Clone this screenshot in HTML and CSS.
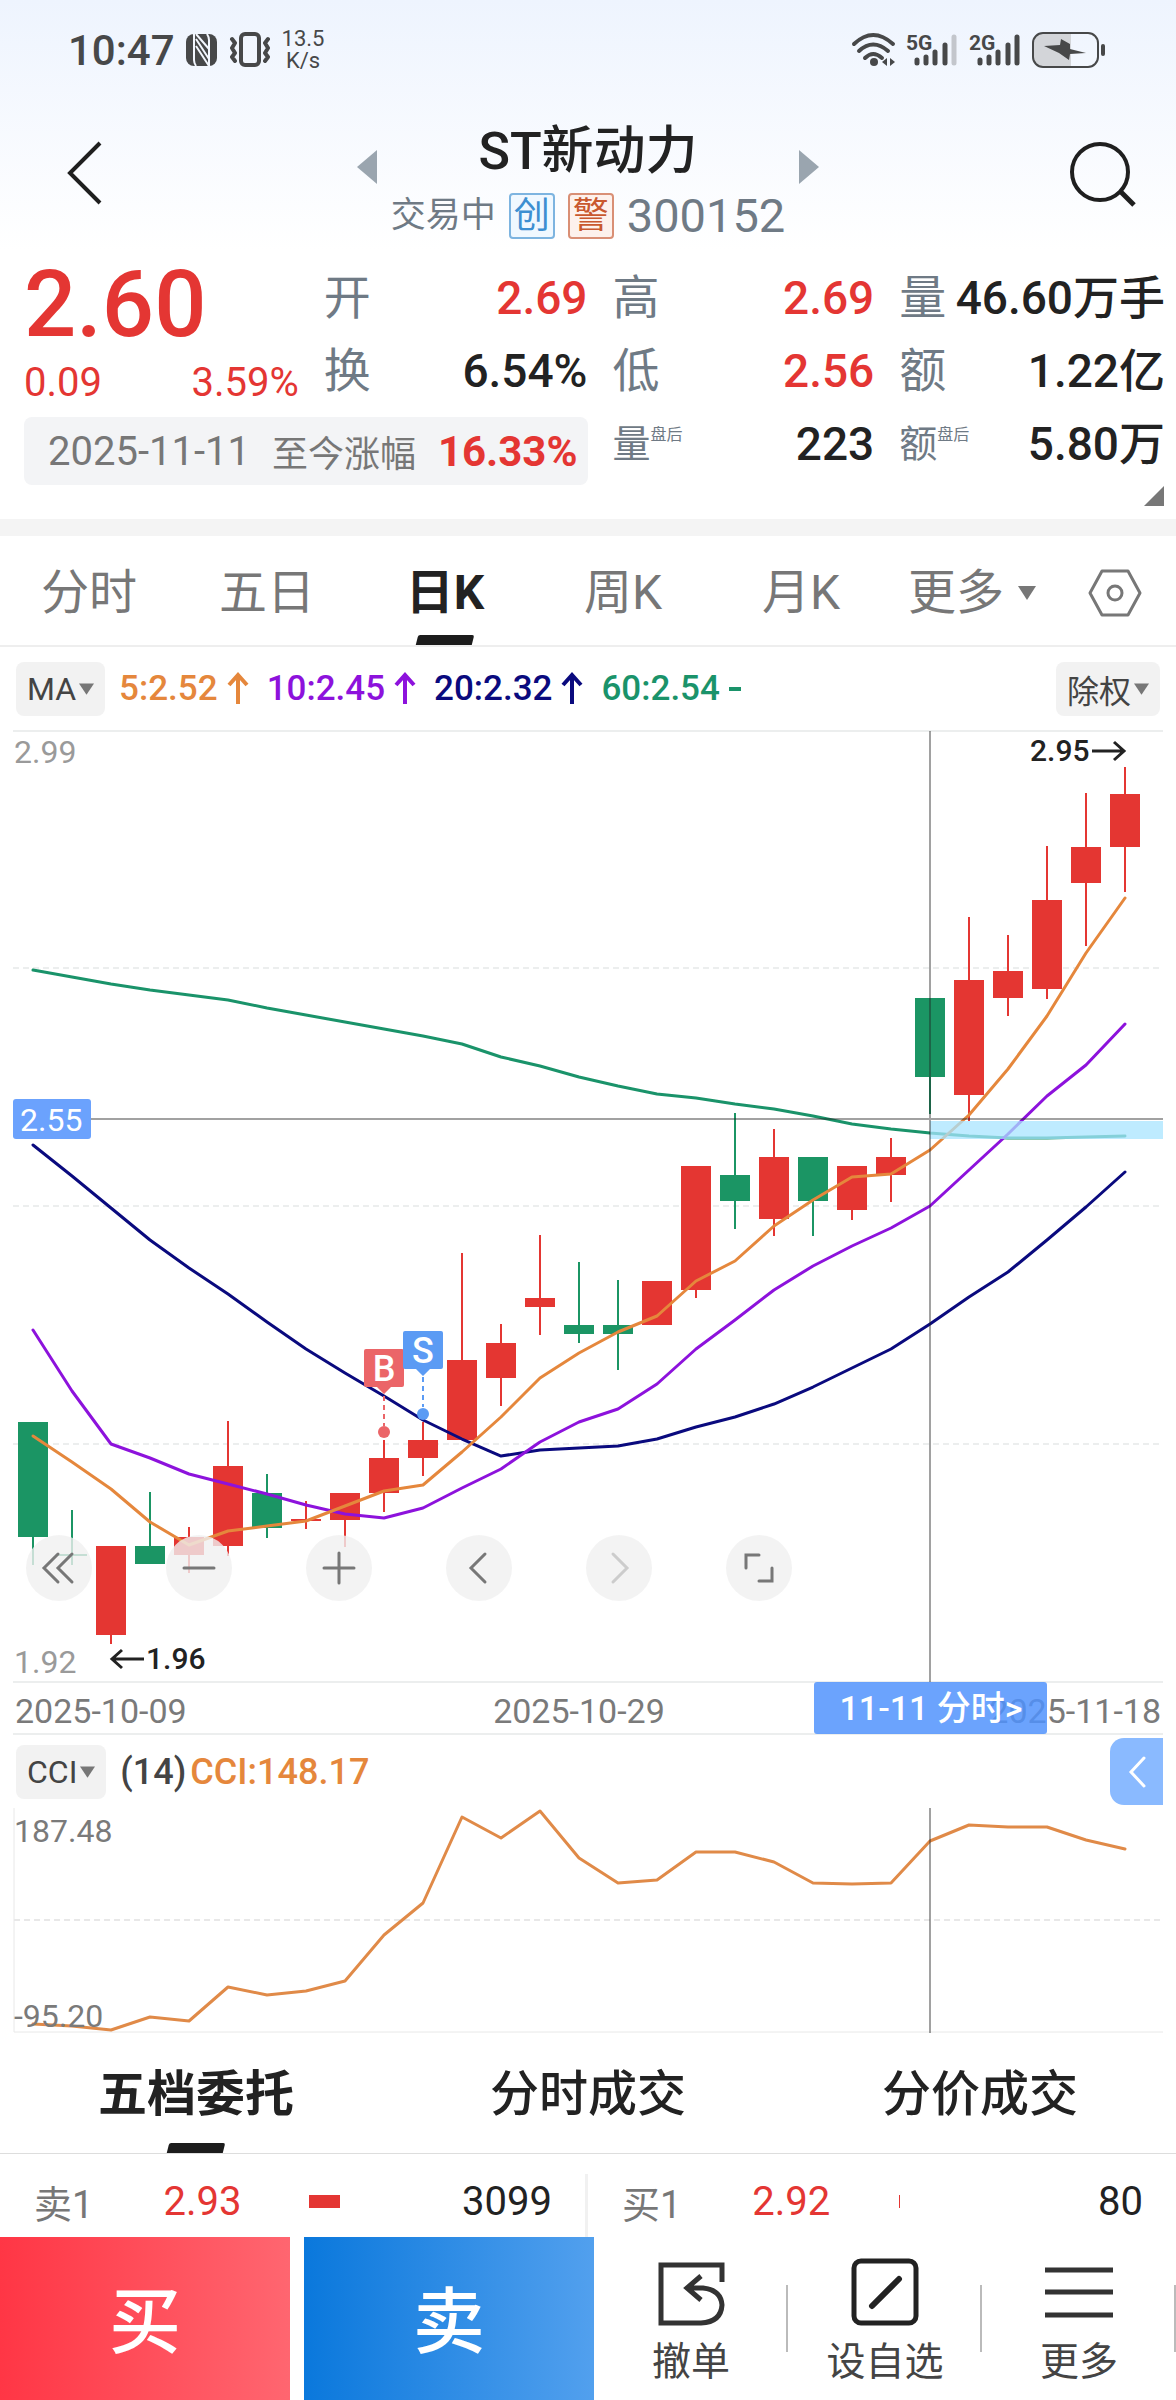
FILE: index.html
```html
<!DOCTYPE html>
<html lang="zh-CN">

<head>
    <meta charset="UTF-8">
    <meta name="viewport" content="width=device-width, initial-scale=1.0">
    <title>ST新动力 300152</title>
    <link rel="stylesheet" href="styles.css">
</head>

<body>
    <div class="top">
        <div class="status-bar">
            <div class="status-left">
                <span class="clock">10:47</span>
                <svg width="32" height="34" viewBox="0 0 32 34">
                    <rect x="0" y="1" width="31" height="32" rx="8" fill="#474849" />
                    <path d="M8 1v26q0 3 2 6M10 6l13 20M10 13l13 20M10 1l13 15M23 33V7q0-3-2-6" fill="none" stroke="#f3f7fe" stroke-width="2" />
                </svg>
                <svg width="42" height="36" viewBox="0 0 42 36">
                    <rect x="12" y="2" width="18" height="31" rx="4" fill="none" stroke="#474849" stroke-width="4" />
                    <path d="M3 7l3 4-3 5 3 5-3 4 3 4M39 7l-3 4 3 5-3 5 3 4-3 4" fill="none" stroke="#474849" stroke-width="4" stroke-linecap="round" stroke-linejoin="round" />
                </svg>
                <span class="speed">13.5<br>K/s</span>
            </div>
            <div class="status-right">
                <svg width="46" height="36" viewBox="0 0 46 36" fill="none" stroke="#474849" stroke-width="4" stroke-linecap="round">
                    <path d="M3 12q19-18 39 0M8 19q14-13 29 0M14 26q8-8 17 0" />
                    <circle cx="23" cy="30" r="4" fill="#474849" stroke="none" />
                    <path d="M36 26v8l-5-4zM39 26v8l5-4z" fill="#474849" stroke="none" />
                </svg>
                <svg width="54" height="36" viewBox="0 0 54 36" stroke-width="5" stroke-linecap="round" stroke="#474849">
                    <text class="net" x="0" y="18">5G</text>
                    <path d="M11 28v3M20 25v6M29 20v11M39 13v18" />
                    <path d="M48 5v26" stroke="#c3c6cc" />
                </svg>
                <svg width="54" height="36" viewBox="0 0 54 36" stroke-width="5" stroke-linecap="round" stroke="#474849">
                    <text class="net" x="0" y="18">2G</text>
                    <path d="M11 28v3M20 25v6M29 20v11M39 13v18M48 5v26" />
                </svg>
                <svg width="74" height="38" viewBox="0 0 74 38">
                    <path d="M12 2h27v34H12q-10 0-10-10V12q0-10 10-10z" fill="#d3d5d9" />
                    <rect x="1" y="2" width="65" height="34" rx="10" fill="none" stroke="#474849" stroke-width="2" />
                    <path d="M12 15l16-1 1-6 9 5v5l16 4-16 1-1 6-10-7z" fill="#474849" />
                    <path d="M71 15v8" stroke="#474849" stroke-width="4" stroke-linecap="round" />
                </svg>
            </div>
        </div>

        <header class="header">
            <button class="icon-button" aria-label="返回">
                <svg width="38" height="64" viewBox="0 0 38 64"><path d="M34 2L4 32l30 30" fill="none" stroke="#1f1f1f" stroke-width="4" /></svg>
            </button>
            <div class="stock">
                <div class="stock-row">
                    <button class="icon-button" aria-label="上一只"><svg width="20" height="34" viewBox="0 0 20 34"><path d="M20 0v34L0 17z" fill="#9aa5af" /></svg></button>
                    <h1>ST新动力</h1>
                    <button class="icon-button" aria-label="下一只"><svg width="20" height="34" viewBox="0 0 20 34"><path d="M0 0v34l20-17z" fill="#9aa5af" /></svg></button>
                </div>
                <div class="stock-info">
                    <span>交易中</span>
                    <span class="badge blue">创</span>
                    <span class="badge orange">警</span>
                    <span class="code">300152</span>
                </div>
            </div>
            <button class="icon-button" aria-label="搜索">
                <svg width="70" height="66" viewBox="0 0 70 66" fill="none" stroke="#1f1f1f" stroke-width="4"><circle cx="32" cy="31" r="28" /><path d="M53 51l13 13" stroke-width="5" /></svg>
            </button>
        </header>
    </div>

    <section class="quote">
        <div class="price">
            <div class="price-now">2.60</div>
            <div class="price-change"><span>0.09</span><span>3.59%</span></div>
        </div>
        <div class="stat"><span class="label">开</span><span class="value red">2.69</span></div>
        <div class="stat"><span class="label">高</span><span class="value red">2.69</span></div>
        <div class="stat"><span class="label">量</span><span class="value">46.60万手</span></div>
        <div class="stat"><span class="label">换</span><span class="value">6.54%</span></div>
        <div class="stat"><span class="label">低</span><span class="value red">2.56</span></div>
        <div class="stat"><span class="label">额</span><span class="value">1.22亿</span></div>
        <div class="since"><span>2025-11-11</span><span>至今涨幅</span><b>16.33%</b></div>
        <div class="stat"><span class="label small">量<sup>盘后</sup></span><span class="value">223</span></div>
        <div class="stat"><span class="label small">额<sup>盘后</sup></span><span class="value">5.80万</span></div>
        <svg class="corner" width="20" height="20" viewBox="0 0 20 20"><path d="M20 0v20H0z" fill="#777" /></svg>
    </section>

    <nav class="period-tabs">
        <button>分时</button>
        <button>五日</button>
        <button class="active">日K</button>
        <button>周K</button>
        <button>月K</button>
        <button>更多<svg width="18" height="14" viewBox="0 0 18 14"><path d="M0 0h18L9 14z" fill="#777" /></svg></button>
        <button aria-label="设置">
            <svg width="54" height="48" viewBox="0 0 54 48" fill="none" stroke="#777" stroke-width="3"><path d="M14 2h26l12 22-12 22H14L2 24z" stroke-linejoin="round" /><circle cx="27" cy="24" r="7" /></svg>
        </button>
    </nav>

    <div class="indicator">
        <button class="pick">MA<svg width="15" height="12" viewBox="0 0 16 12"><path d="M0 0h16L8 12z" fill="#777" /></svg></button>
        <span class="ma5">5:2.52<svg width="22" height="32" viewBox="0 0 22 32"><path d="M11 31V2M2 12l9-10 9 10" /></svg></span>
        <span class="ma10">10:2.45<svg width="22" height="32" viewBox="0 0 22 32"><path d="M11 31V2M2 12l9-10 9 10" /></svg></span>
        <span class="ma20">20:2.32<svg width="22" height="32" viewBox="0 0 22 32"><path d="M11 31V2M2 12l9-10 9 10" /></svg></span>
        <span class="ma60">60:2.54<svg width="12" height="32" viewBox="0 0 12 32"><path d="M0 16h12" /></svg></span>
        <button class="pick last">除权<svg width="15" height="12" viewBox="0 0 16 12"><path d="M0 0h16L8 12z" fill="#777" /></svg></button>
    </div>

    <div class="k-chart">
        <svg class="chart" viewBox="0 730 1176 1005">
            <g stroke="#eceeee" stroke-width="2">
                <path d="M13 731h1150M13 1682h1150M13 1734h1150" />
                <path d="M13 968h1150M13 1206h1150M13 1444h1150" stroke-dasharray="6 4" />
            </g>
            <g id="candles"></g>
            <g id="averages" fill="none" stroke-width="3" stroke-linejoin="round" stroke-linecap="round"></g>
            <rect x="930" y="1121" width="233" height="18" fill="#a8e4ff" opacity="0.75" />
            <path d="M13 1119h1150M930 731v951" stroke="#222" stroke-width="2" opacity="0.42" />

            <!-- buy / sell marks -->
            <path d="M384 1396v30" stroke="#eb6568" stroke-width="2" stroke-dasharray="5 4" />
            <path d="M366 1349h36q2 0 2 2v34q0 2-2 2h-11l-7 7-7-7h-11q-2 0-2-2v-34q0-2 2-2z" fill="#eb6568" />
            <circle cx="384" cy="1432" r="6" fill="#eb6568" />
            <text class="mark" x="384" y="1381">B</text>
            <path d="M423 1377v30" stroke="#5b9bf4" stroke-width="2" stroke-dasharray="5 4" />
            <path d="M405 1331h36q2 0 2 2v34q0 2-2 2h-11l-7 7-7-7h-11q-2 0-2-2v-34q0-2 2-2z" fill="#5b9bf4" />
            <circle cx="423" cy="1414" r="6" fill="#5b9bf4" />
            <text class="mark" x="423" y="1363">S</text>

            <text class="scale light" x="14" y="763">2.99</text>
            <text class="scale light" x="14" y="1673">1.92</text>
            <text class="scale dark" x="1030" y="761">2.95</text>
            <path d="M1092 751h32M1114 742l10 9-10 9" fill="none" stroke="#222" stroke-width="3" />
            <text class="scale dark" x="146" y="1669">1.96</text>
            <path d="M144 1659h-32M122 1650l-10 9 10 9" fill="none" stroke="#222" stroke-width="3" />
            <rect x="13" y="1099" width="78" height="40" rx="3" fill="#6ba2fd" />
            <text class="scale white" x="20" y="1131">2.55</text>

            <text class="date" x="15" y="1723">2025-10-09</text>
            <text class="date" x="579" y="1723" text-anchor="middle">2025-10-29</text>
            <text class="date" x="1161" y="1723" text-anchor="end">2025-11-18</text>
            <rect x="814" y="1682" width="233" height="52" rx="3" fill="#4f91fd" opacity="0.84" />
            <text class="date tag" x="931" y="1720" text-anchor="middle">11-11 分时&gt;</text>
        </svg>
        <div class="chart-tools">
            <button aria-label="最早"><svg viewBox="0 0 66 66"><path d="M32 19L18 33l14 14M46 19L32 33l14 14" /></svg></button>
            <button aria-label="缩小"><svg viewBox="0 0 66 66"><path d="M18 33h30" /></svg></button>
            <button aria-label="放大"><svg viewBox="0 0 66 66"><path d="M18 33h30M33 18v30" /></svg></button>
            <button aria-label="左移"><svg viewBox="0 0 66 66"><path d="M39 19L25 33l14 14" /></svg></button>
            <button aria-label="右移" disabled><svg viewBox="0 0 66 66"><path d="M27 19l14 14-14 14" /></svg></button>
            <button aria-label="全屏"><svg viewBox="0 0 66 66"><path d="M33 20H20v13M33 46h13V33" /></svg></button>
        </div>
    </div>

    <div class="indicator cci">
        <button class="pick">CCI<svg width="15" height="12" viewBox="0 0 16 12"><path d="M0 0h16L8 12z" fill="#777" /></svg></button>
        <span class="cci-value"><span class="param">(14)</span>CCI:148.17</span>
        <button class="drawer" aria-label="展开"><svg width="18" height="32" viewBox="0 0 18 32"><path d="M16 2L3 16l13 14" fill="none" stroke="#fff" stroke-width="3" stroke-linecap="round" /></svg></button>
    </div>

    <svg class="chart" viewBox="0 1808 1176 225">
        <path d="M14 1808v224h1149" fill="none" stroke="#e8e8e8" stroke-width="1" />
        <path d="M14 1920h1149" stroke="#e8e8e8" stroke-width="2" stroke-dasharray="6 4" />
        <g id="cci" fill="none" stroke-width="3" stroke-linejoin="round" stroke-linecap="round"></g>
        <path d="M930 1808v225" stroke="#222" stroke-width="2" opacity="0.42" />
        <text class="scale" x="14" y="1842">187.48</text>
        <text class="scale" x="14" y="2027">-95.20</text>
    </svg>

    <nav class="deal-tabs">
        <button class="active">五档委托</button>
        <button>分时成交</button>
        <button>分价成交</button>
    </nav>

    <div class="orders">
        <div class="order"><span class="side">卖1</span><span class="red">2.93</span><i class="bar"></i><span class="count">3099</span></div>
        <div class="order"><span class="side">买1</span><span class="red">2.92</span><i class="bar thin"></i><span class="count">80</span></div>
    </div>

    <footer class="actions">
        <button class="buy">买</button>
        <button class="sell">卖</button>
        <button class="action">
            <svg width="70" height="68" viewBox="0 0 70 68" fill="none" stroke="#333" stroke-width="5"><path d="M66 24V7H5v58h40q20-1 21-18-1-15-19-17H32M45 18L31 30l14 12" /></svg>
            撤单
        </button>
        <button class="action">
            <svg width="70" height="68" viewBox="0 0 70 68" fill="none" stroke="#222" stroke-width="5"><rect x="4" y="3" width="62" height="62" rx="7" /><path d="M22 48l27-27" stroke-width="6" stroke-linecap="round" /></svg>
            设自选
        </button>
        <button class="action">
            <svg width="70" height="68" viewBox="0 0 70 68" fill="none" stroke="#333" stroke-width="5"><path d="M1 12h68M1 34h68M1 57h68" /></svg>
            更多
        </button>
    </footer>

    <script src="chart.js"></script>
</body>

</html>
```
FILE: styles.css
```css
* {
    box-sizing: border-box;
}

body {
    margin: 0;
    background-color: #fff;
    color: #222;
    font-family: Roboto, "Noto Sans CJK SC", sans-serif;
}

button {
    margin: 0;
    padding: 0;
    border: 0;
    background: none;
    color: inherit;
    font: inherit;
}

svg {
    display: block;
    flex-shrink: 0;
    overflow: visible;
}

.red {
    color: #e43633;
}

.top {
    background: linear-gradient(#eef4fe, #fff);
}

.status-bar {
    display: flex;
    align-items: center;
    justify-content: space-between;
    height: 100px;
    padding: 0 70px 0 68px;
    color: #474849;
}

.status-left,
.status-right {
    display: flex;
    align-items: center;
    gap: 11px;
}

.status-right {
    gap: 9px;
}

.clock {
    font-size: 42px;
    font-weight: 500;
}

.speed {
    font-size: 22px;
    line-height: 22px;
    text-align: center;
}

.net {
    font-size: 21px;
    font-weight: 700;
    fill: #474849;
    stroke: none;
}

.header {
    display: flex;
    align-items: flex-start;
    justify-content: space-between;
    height: 150px;
    padding: 20px 38px 0 66px;
}

.header > .icon-button {
    padding-top: 21px;
}

.stock {
    width: 462px;
    margin-left: 4px;
}

.stock-row {
    display: flex;
    align-items: flex-end;
    justify-content: space-between;
}

.stock h1 {
    margin: 0;
    font-size: 52px;
    line-height: 64px;
    font-weight: 500;
}

.stock-info {
    display: flex;
    align-items: center;
    justify-content: center;
    gap: 13px;
    margin-top: 9px;
    font-size: 35px;
    line-height: 46px;
    color: #6f7a85;
}

.badge {
    width: 46px;
    height: 46px;
    border: 2px solid;
    border-radius: 4px;
    font-size: 36px;
    line-height: 42px;
    text-align: center;
}

.badge.blue {
    color: #3d8fd1;
    background-color: #f0f8ff;
    border-color: #7db4e0;
}

.badge.orange {
    color: #c9582e;
    background-color: #fdf1ec;
    border-color: #d98f75;
}

.code {
    font-size: 47px;
}

.quote {
    position: relative;
    display: grid;
    grid-template-columns: 274fr 263fr 261fr 265fr;
    grid-template-rows: 73px 73px 79px;
    column-gap: 25px;
    padding: 10px 11px 34px 24px;
    border-bottom: 17px solid #f4f4f4;
}

.price {
    grid-row: span 2;
    color: #e43633;
}

.price-now {
    font-size: 92px;
    line-height: 90px;
    font-weight: 500;
}

.price-change {
    display: flex;
    justify-content: space-between;
    font-size: 40px;
    line-height: 66px;
}

.stat {
    display: flex;
    align-items: center;
    justify-content: space-between;
    height: 73px;
    padding-top: 2px;
    white-space: nowrap;
}

.label {
    font-size: 47px;
    line-height: 60px;
    color: #6f7a85;
}

.label.small {
    display: flex;
    font-size: 38px;
}

.label sup {
    font-size: 16px;
    line-height: 42px;
}

.value {
    font-size: 46px;
    line-height: 60px;
    font-weight: 500;
}

.since {
    display: flex;
    align-items: center;
    justify-content: space-between;
    grid-column: span 2;
    align-self: end;
    height: 68px;
    padding: 0 10px 0 24px;
    border-radius: 8px;
    background-color: #f3f4f6;
    font-size: 36px;
    color: #777;
    white-space: nowrap;
}

.since span:first-child {
    font-size: 40px;
}

.since b {
    font-size: 42px;
    color: #e43633;
}

.corner {
    position: absolute;
    right: 12px;
    bottom: 13px;
}

.period-tabs {
    display: grid;
    grid-template-columns: 178fr 178fr 178fr 178fr 178fr 164fr 122fr;
    height: 111px;
    border-bottom: 2px solid #eee;
}

.period-tabs button,
.deal-tabs button {
    position: relative;
    display: flex;
    align-items: center;
    justify-content: center;
    gap: 14px;
    padding-top: 4px;
    font-size: 48px;
    line-height: 60px;
    white-space: nowrap;
}

.period-tabs button {
    color: #777;
}

.period-tabs .active,
.deal-tabs .active {
    color: #222;
    font-weight: 700;
}

.period-tabs .active::after,
.deal-tabs .active::after {
    content: "";
    position: absolute;
    bottom: 0;
    width: 56px;
    height: 10px;
    border-radius: 2px 2px 0 0;
    background-color: #1c1c1c;
    transform: skewX(-14deg);
}

.indicator {
    display: flex;
    align-items: center;
    height: 83px;
    padding: 0 16px;
    gap: 14px;
    font-size: 35px;
    font-weight: 500;
}

.indicator span {
    display: flex;
    align-items: center;
    gap: 9px;
    margin-right: 4px;
}

.indicator span path {
    fill: none;
    stroke: currentColor;
    stroke-width: 4;
}

.pick {
    display: flex;
    align-items: center;
    gap: 3px;
    height: 54px;
    padding: 0 11px;
    border-radius: 8px;
    background-color: #f2f2f2;
    color: #444;
    font-size: 32px;
    font-weight: 400;
}

.pick.last {
    margin-left: auto;
}

.ma5 {
    color: #e5873c;
}

.ma10 {
    color: #8d12dc;
}

.ma20 {
    color: #0a0a7e;
}

.ma60 {
    color: #1a936a;
}

.k-chart {
    position: relative;
}

.chart {
    width: 100%;
    height: auto;
}

.scale {
    font-size: 32px;
    fill: #7a7a7a;
}

.scale.light {
    fill: #9a9a9a;
}

.scale.dark {
    font-size: 30px;
    font-weight: 500;
    fill: #222;
}

.scale.white {
    fill: #fff;
}

.date {
    font-size: 34px;
    fill: #7a7a7a;
}

.date.tag {
    font-weight: 500;
    fill: #fff;
}

.mark {
    font-size: 36px;
    font-weight: 500;
    fill: #fff;
    text-anchor: middle;
}

.chart-tools {
    position: absolute;
    left: 26px;
    bottom: 134px;
    display: flex;
    gap: 74px;
}

.chart-tools button {
    width: 66px;
    height: 66px;
    border-radius: 50%;
    background-color: rgba(240, 240, 240, 0.8);
}

.chart-tools path {
    fill: none;
    stroke: #777;
    stroke-width: 3;
    stroke-linecap: round;
}

.chart-tools button:disabled path {
    stroke: #ccc;
}

.indicator.cci {
    height: 73px;
    padding-right: 13px;
}

.indicator .cci-value {
    gap: 4px;
    color: #e5873c;
    font-size: 36px;
}

.indicator .param {
    margin: 0;
    color: #444;
}

.drawer {
    display: flex;
    align-items: center;
    justify-content: center;
    width: 53px;
    height: 67px;
    margin-left: auto;
    border-radius: 14px 0 0 14px;
    background-color: #8abaff;
}

.deal-tabs {
    display: grid;
    grid-template-columns: repeat(3, 1fr);
    height: 121px;
    border-bottom: 1px solid #ddd;
}

.deal-tabs button {
    font-size: 49px;
    font-weight: 500;
}

.orders {
    display: grid;
    grid-template-columns: 1fr 1fr;
    height: 83px;
    font-size: 40px;
}

.order {
    display: grid;
    grid-template-columns: 130fr 146fr 120fr 124fr;
    align-items: center;
    margin-top: 20px;
    padding: 0 33px 20px 34px;
}

.order:first-child {
    border-right: 3px solid #f1f1f1;
}

.side {
    font-size: 38px;
    color: #777;
}

.bar {
    width: 31px;
    height: 13px;
    background-color: #e43633;
}

.bar.thin {
    width: 1px;
}

.count {
    text-align: right;
}

.actions {
    display: grid;
    grid-template-columns: 290fr 14fr 290fr 194fr 194fr 194fr;
    height: 163px;
}

.buy,
.sell {
    padding-bottom: 6px;
    color: #fff;
    font-size: 72px;
    font-weight: 500;
}

.buy {
    background: linear-gradient(to right, #ff3645, #ff6670);
}

.sell {
    grid-column: 3;
    background: linear-gradient(to right, #0a78dc, #52a0ee);
}

.action {
    position: relative;
    display: flex;
    flex-direction: column;
    align-items: center;
    gap: 10px;
    padding-top: 21px;
    color: #444;
    font-size: 39px;
    line-height: 52px;
}

.action::after {
    content: "";
    position: absolute;
    top: 48px;
    right: 0;
    width: 2px;
    height: 67px;
    background-color: #bbb;
}
```
FILE: chart.js
```js
const ns = 'http://www.w3.org/2000/svg'
const red = '#e43632'
const green = '#1b9564'

// body top, body bottom, high, low, color
const candles = [
    [1422, 1537, 1422, 1565, green],
    [1554, 1556, 1510, 1565, green],
    [1546, 1635, 1546, 1644, red],
    [1546, 1564, 1492, 1564, green],
    [1537, 1555, 1527, 1573, red],
    [1466, 1546, 1421, 1556, red],
    [1493, 1528, 1474, 1538, green],
    [1519, 1521, 1501, 1529, red],
    [1493, 1520, 1493, 1547, red],
    [1458, 1493, 1440, 1512, red],
    [1440, 1458, 1422, 1476, red],
    [1360, 1440, 1253, 1440, red],
    [1343, 1378, 1324, 1406, red],
    [1298, 1307, 1235, 1335, red],
    [1325, 1334, 1262, 1343, green],
    [1325, 1334, 1280, 1370, green],
    [1281, 1325, 1281, 1325, red],
    [1166, 1290, 1166, 1298, red],
    [1175, 1201, 1113, 1229, green],
    [1157, 1219, 1129, 1236, red],
    [1157, 1201, 1157, 1236, green],
    [1166, 1210, 1166, 1220, red],
    [1157, 1175, 1138, 1202, red],
    [998, 1077, 998, 1114, green],
    [980, 1095, 917, 1121, red],
    [971, 998, 935, 1016, red],
    [900, 989, 846, 999, red],
    [847, 883, 793, 946, red],
    [794, 847, 767, 892, red]
]

const ma60 = [970, 977, 984, 990, 995, 1000, 1008, 1015, 1022, 1029, 1036, 1044, 1057, 1066, 1077, 1086, 1094, 1098, 1104, 1109, 1116, 1124, 1129, 1133, 1136, 1138, 1138, 1137, 1136]
const ma20 = [1145, 1176, 1208, 1240, 1268, 1294, 1322, 1349, 1373, 1396, 1420, 1439, 1456, 1450, 1448, 1446, 1439, 1427, 1417, 1404, 1387, 1368, 1349, 1324, 1297, 1272, 1240, 1207, 1172]
const ma10 = [1330, 1391, 1444, 1458, 1474, 1484, 1494, 1505, 1514, 1518, 1508, 1488, 1469, 1442, 1422, 1409, 1384, 1349, 1320, 1290, 1266, 1246, 1228, 1206, 1170, 1134, 1096, 1065, 1024]
const ma5 = [1436, 1462, 1489, 1522, 1545, 1531, 1526, 1521, 1506, 1491, 1485, 1452, 1417, 1378, 1353, 1332, 1316, 1281, 1261, 1226, 1200, 1177, 1174, 1150, 1115, 1069, 1016, 953, 898]
const cci = [2024, 2026, 2030, 2017, 2021, 1987, 1995, 1991, 1981, 1935, 1903, 1817, 1838, 1811, 1858, 1883, 1880, 1852, 1852, 1862, 1883, 1884, 1883, 1841, 1825, 1827, 1827, 1840, 1849]

function getX(index) {
    return 33 + index * 39
}

function addRect(parent, x, y, width, height, color) {
    const rect = document.createElementNS(ns, 'rect')
    rect.setAttribute('x', x)
    rect.setAttribute('y', y)
    rect.setAttribute('width', width)
    rect.setAttribute('height', height)
    rect.setAttribute('fill', color)
    parent.append(rect)
}

function addLine(parent, values, color) {
    const line = document.createElementNS(ns, 'polyline')
    line.setAttribute('points', values.map((y, i) => getX(i) + ',' + y).join(' '))
    line.setAttribute('stroke', color)
    parent.append(line)
}

const candleGroup = document.getElementById('candles')
candles.forEach(function (item, i) {
    const [top, bottom, high, low, color] = item
    addRect(candleGroup, getX(i) - 1, high, 2, low - high, color)
    addRect(candleGroup, getX(i) - 15, top, 30, bottom - top, color)
})

const averages = document.getElementById('averages')
addLine(averages, ma60, '#1a936a')
addLine(averages, ma20, '#0a0a7e')
addLine(averages, ma10, '#8d12dc')
addLine(averages, ma5, '#e5873c')
addLine(document.getElementById('cci'), cci, '#e08a48')
```
